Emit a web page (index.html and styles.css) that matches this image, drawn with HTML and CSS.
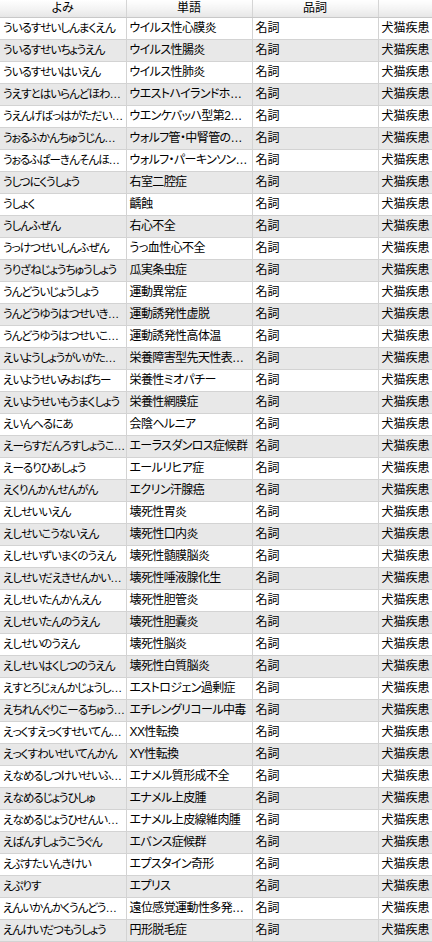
FILE: index.html
```html
<!DOCTYPE html>
<html lang="ja">
<head>
<meta charset="utf-8">
<link rel="stylesheet" href="styles.css">
</head>
<body>
<table class="grid">
<colgroup><col class="c1"><col class="c2"><col class="c3"><col class="c4"></colgroup>
<thead>
<tr><th>よみ</th><th>単語</th><th>品詞</th><th></th></tr>
</thead>
<tbody>
<tr><td>ういるすせいしんまくえん</td><td>ウイルス性心膜炎</td><td>名詞</td><td>犬猫疾患</td></tr>
<tr><td>ういるすせいちょうえん</td><td>ウイルス性腸炎</td><td>名詞</td><td>犬猫疾患</td></tr>
<tr><td>ういるすせいはいえん</td><td>ウイルス性肺炎</td><td>名詞</td><td>犬猫疾患</td></tr>
<tr><td>うえすとはいらんどほわいとてりあ</td><td>ウエストハイランドホワイトテリア</td><td>名詞</td><td>犬猫疾患</td></tr>
<tr><td>うえんげばっはがただい2どぼうしつぶろっく</td><td>ウエンケバッハ型第2度房室ブロック</td><td>名詞</td><td>犬猫疾患</td></tr>
<tr><td>うぉるふかんちゅうじんかんのいざん</td><td>ウォルフ管・中腎管の遺残</td><td>名詞</td><td>犬猫疾患</td></tr>
<tr><td>うぉるふぱーきんそんほわいとしょうこうぐん</td><td>ウォルフ・パーキンソン・ホワイト症候群</td><td>名詞</td><td>犬猫疾患</td></tr>
<tr><td>うしつにくうしょう</td><td>右室二腔症</td><td>名詞</td><td>犬猫疾患</td></tr>
<tr><td>うしょく</td><td>齲蝕</td><td>名詞</td><td>犬猫疾患</td></tr>
<tr><td>うしんふぜん</td><td>右心不全</td><td>名詞</td><td>犬猫疾患</td></tr>
<tr><td>うっけつせいしんふぜん</td><td>うっ血性心不全</td><td>名詞</td><td>犬猫疾患</td></tr>
<tr><td>うりざねじょうちゅうしょう</td><td>瓜実条虫症</td><td>名詞</td><td>犬猫疾患</td></tr>
<tr><td>うんどういじょうしょう</td><td>運動異常症</td><td>名詞</td><td>犬猫疾患</td></tr>
<tr><td>うんどうゆうはつせいきょだつ</td><td>運動誘発性虚脱</td><td>名詞</td><td>犬猫疾患</td></tr>
<tr><td>うんどうゆうはつせいこうたいおん</td><td>運動誘発性高体温</td><td>名詞</td><td>犬猫疾患</td></tr>
<tr><td>えいようしょうがいがたせんてんせいひょうひすいほうしょう</td><td>栄養障害型先天性表皮水疱症</td><td>名詞</td><td>犬猫疾患</td></tr>
<tr><td>えいようせいみおぱちー</td><td>栄養性ミオパチー</td><td>名詞</td><td>犬猫疾患</td></tr>
<tr><td>えいようせいもうまくしょう</td><td>栄養性網膜症</td><td>名詞</td><td>犬猫疾患</td></tr>
<tr><td>えいんへるにあ</td><td>会陰ヘルニア</td><td>名詞</td><td>犬猫疾患</td></tr>
<tr><td>えーらすだんろすしょうこうぐん</td><td>エーラスダンロス症候群</td><td>名詞</td><td>犬猫疾患</td></tr>
<tr><td>えーるりひあしょう</td><td>エールリヒア症</td><td>名詞</td><td>犬猫疾患</td></tr>
<tr><td>えくりんかんせんがん</td><td>エクリン汗腺癌</td><td>名詞</td><td>犬猫疾患</td></tr>
<tr><td>えしせいいえん</td><td>壊死性胃炎</td><td>名詞</td><td>犬猫疾患</td></tr>
<tr><td>えしせいこうないえん</td><td>壊死性口内炎</td><td>名詞</td><td>犬猫疾患</td></tr>
<tr><td>えしせいずいまくのうえん</td><td>壊死性髄膜脳炎</td><td>名詞</td><td>犬猫疾患</td></tr>
<tr><td>えしせいだえきせんかいせい</td><td>壊死性唾液腺化生</td><td>名詞</td><td>犬猫疾患</td></tr>
<tr><td>えしせいたんかんえん</td><td>壊死性胆管炎</td><td>名詞</td><td>犬猫疾患</td></tr>
<tr><td>えしせいたんのうえん</td><td>壊死性胆嚢炎</td><td>名詞</td><td>犬猫疾患</td></tr>
<tr><td>えしせいのうえん</td><td>壊死性脳炎</td><td>名詞</td><td>犬猫疾患</td></tr>
<tr><td>えしせいはくしつのうえん</td><td>壊死性白質脳炎</td><td>名詞</td><td>犬猫疾患</td></tr>
<tr><td>えすとろじぇんかじょうしょう</td><td>エストロジェン過剰症</td><td>名詞</td><td>犬猫疾患</td></tr>
<tr><td>えちれんぐりこーるちゅうどく</td><td>エチレングリコール中毒</td><td>名詞</td><td>犬猫疾患</td></tr>
<tr><td>えっくすえっくすせいてんかん</td><td>XX性転換</td><td>名詞</td><td>犬猫疾患</td></tr>
<tr><td>えっくすわいせいてんかん</td><td>XY性転換</td><td>名詞</td><td>犬猫疾患</td></tr>
<tr><td>えなめるしつけいせいふぜん</td><td>エナメル質形成不全</td><td>名詞</td><td>犬猫疾患</td></tr>
<tr><td>えなめるじょうひしゅ</td><td>エナメル上皮腫</td><td>名詞</td><td>犬猫疾患</td></tr>
<tr><td>えなめるじょうひせんいにくしゅ</td><td>エナメル上皮線維肉腫</td><td>名詞</td><td>犬猫疾患</td></tr>
<tr><td>えばんすしょうこうぐん</td><td>エバンス症候群</td><td>名詞</td><td>犬猫疾患</td></tr>
<tr><td>えぷすたいんきけい</td><td>エプスタイン奇形</td><td>名詞</td><td>犬猫疾患</td></tr>
<tr><td>えぷりす</td><td>エプリス</td><td>名詞</td><td>犬猫疾患</td></tr>
<tr><td>えんいかんかくうんどうせいたはつにゅーろぱちー</td><td>遠位感覚運動性多発ニューロパチー</td><td>名詞</td><td>犬猫疾患</td></tr>
<tr><td>えんけいだつもうしょう</td><td>円形脱毛症</td><td>名詞</td><td>犬猫疾患</td></tr>
</tbody>
</table>
</body>
</html>
```

FILE: styles.css
```css
html, body {
  margin: 0;
  padding: 0;
  background: #ffffff;
}

body {
  width: 432px;
  overflow: hidden;
  font-family: "Liberation Sans", "Noto Sans CJK JP", sans-serif;
  font-size: 12px;
  color: #000000;
  font-feature-settings: "palt";
}

.grid {
  border-collapse: collapse;
  table-layout: fixed;
  width: 432px;
}

.c1 { width: 126px; }
.c2 { width: 126px; }
.c3 { width: 126px; }
.c4 { width: 54px; }

.grid th {
  height: 17px;
  padding: 0;
  font-weight: normal;
  text-align: center;
  line-height: 17px;
  background: linear-gradient(#ffffff, #f3f3f3 55%, #e6e6e6);
  border-right: 1px solid #d5d5d5;
  border-bottom: 1px solid #c8c8c8;
  white-space: nowrap;
  overflow: hidden;
}

.grid td {
  height: 21px;
  padding: 0 0 0 3px;
  line-height: 21px;
  border-right: 1px solid #d3d3d3;
  border-bottom: 1px solid #d3d3d3;
  white-space: nowrap;
  overflow: hidden;
  text-overflow: ellipsis;
}

.grid td:first-child {
  font-size: 11.5px;
  letter-spacing: -0.95px;
}

.grid td:nth-child(2) {
  letter-spacing: -0.6px;
}

.grid th:last-child,
.grid td:last-child {
  border-right: none;
}

.grid tbody tr:nth-child(even) td {
  background: #e8e8e8;
}
```
